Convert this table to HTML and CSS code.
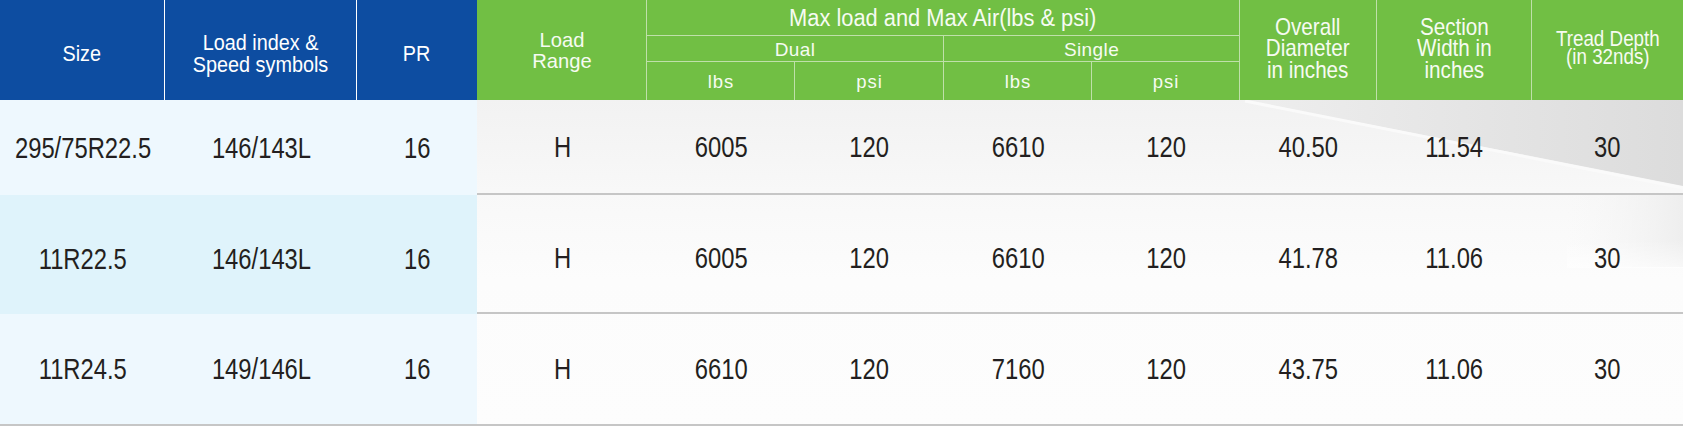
FILE: index.html
```html
<!DOCTYPE html>
<html lang="en">
<head>
<meta charset="utf-8">
<title>Tire specifications</title>
<link rel="stylesheet" href="styles.css">
</head>
<body>
<table class="spec">
  <colgroup>
    <col class="c-size"><col class="c-load"><col class="c-pr"><col class="c-range">
    <col class="c-lbs1"><col class="c-psi1"><col class="c-lbs2"><col class="c-psi2">
    <col class="c-od"><col class="c-sw"><col class="c-td">
  </colgroup>
  <thead>
    <tr class="hr-a">
      <th class="hb line" rowspan="3"><span class="sx">Size</span></th>
      <th class="hb line" rowspan="3"><span class="sx">Load index &amp;<br>Speed symbols</span></th>
      <th class="hb" rowspan="3"><span class="sx">PR</span></th>
      <th class="hg line range" rowspan="3"><span class="sx">Load<br>Range</span></th>
      <th class="hg line under group" colspan="4"><span class="sx">Max load and Max Air(lbs &amp; psi)</span></th>
      <th class="hg line cond" rowspan="3"><span class="sx">Overall<br>Diameter<br>in inches</span></th>
      <th class="hg line cond" rowspan="3"><span class="sx">Section<br>Width in<br>inches</span></th>
      <th class="hg cond tread" rowspan="3"><span class="sx">Tread Depth<br>(in 32nds)</span></th>
    </tr>
    <tr class="hr-b">
      <th class="hg line under sub" colspan="2">Dual</th>
      <th class="hg line under sub" colspan="2">Single</th>
    </tr>
    <tr class="hr-c">
      <th class="hg line unit">lbs</th>
      <th class="hg line unit">psi</th>
      <th class="hg line unit">lbs</th>
      <th class="hg line unit">psi</th>
    </tr>
  </thead>
  <tbody>
    <tr class="r1">
      <td class="lb"><span class="sx">295/75R22.5</span></td><td class="lb"><span class="sx">146/143L</span></td><td class="lb"><span class="sx">16</span></td>
      <td><span class="sx">H</span></td><td><span class="sx">6005</span></td><td><span class="sx">120</span></td><td><span class="sx">6610</span></td><td><span class="sx">120</span></td><td><span class="sx">40.50</span></td><td><span class="sx">11.54</span></td><td><span class="sx">30</span></td>
    </tr>
    <tr class="r2">
      <td class="lb"><span class="sx">11R22.5</span></td><td class="lb"><span class="sx">146/143L</span></td><td class="lb"><span class="sx">16</span></td>
      <td><span class="sx">H</span></td><td><span class="sx">6005</span></td><td><span class="sx">120</span></td><td><span class="sx">6610</span></td><td><span class="sx">120</span></td><td><span class="sx">41.78</span></td><td><span class="sx">11.06</span></td><td><span class="sx">30</span></td>
    </tr>
    <tr class="r3">
      <td class="lb"><span class="sx">11R24.5</span></td><td class="lb"><span class="sx">149/146L</span></td><td class="lb"><span class="sx">16</span></td>
      <td><span class="sx">H</span></td><td><span class="sx">6610</span></td><td><span class="sx">120</span></td><td><span class="sx">7160</span></td><td><span class="sx">120</span></td><td><span class="sx">43.75</span></td><td><span class="sx">11.06</span></td><td><span class="sx">30</span></td>
    </tr>
  </tbody>
</table>
</body>
</html>
```

FILE: styles.css
```css
html, body {
  margin: 0;
  padding: 0;
  background: #ffffff;
}

.spec {
  width: 1683px;
  table-layout: fixed;
  border-collapse: separate;
  border-spacing: 0;
  font-family: "Liberation Sans", Arial, sans-serif;
  background-color: #fbfbfb;
  background-image: url("data:image/svg+xml;utf8,%3Csvg xmlns='http://www.w3.org/2000/svg' width='1206' height='326'%3E%3Cdefs%3E%3ClinearGradient id='b' x1='0' y1='0' x2='0' y2='1'%3E%3Cstop offset='0' stop-color='%23f2f2f2'/%3E%3Cstop offset='0.28' stop-color='%23f8f8f8'/%3E%3Cstop offset='0.55' stop-color='%23fcfcfc'/%3E%3Cstop offset='1' stop-color='%23fdfdfd'/%3E%3C/linearGradient%3E%3ClinearGradient id='g' x1='0' y1='0' x2='1' y2='0'%3E%3Cstop offset='0' stop-color='%23eeeeee'/%3E%3Cstop offset='1' stop-color='%23dcdcdc'/%3E%3C/linearGradient%3E%3ClinearGradient id='e' x1='0' y1='0' x2='1' y2='0'%3E%3Cstop offset='0' stop-color='%23f6f6f6' stop-opacity='0'/%3E%3Cstop offset='1' stop-color='%23eeeeee'/%3E%3C/linearGradient%3E%3ClinearGradient id='v' x1='0' y1='0' x2='0' y2='1'%3E%3Cstop offset='0' stop-color='white' stop-opacity='0'/%3E%3Cstop offset='1' stop-color='white'/%3E%3C/linearGradient%3E%3C/defs%3E%3Crect width='1206' height='326' fill='url(%23b)'/%3E%3Crect x='1090' y='95' width='116' height='72' fill='url(%23e)'/%3E%3Crect x='1090' y='140' width='116' height='28' fill='url(%23v)' opacity='0.6'/%3E%3Cpolygon points='768,0 1206,0 1206,86' fill='url(%23g)'/%3E%3Cline x1='768' y1='1' x2='1206' y2='88' stroke='%23fafafa' stroke-width='3'/%3E%3C/svg%3E");
  background-repeat: no-repeat;
  background-position: 477px 100px;
  background-size: 1206px 326px;
}

.c-size { width: 165px; }
.c-load { width: 192px; }
.c-pr { width: 120px; }
.c-range { width: 170px; }
.c-lbs1 { width: 148px; }
.c-psi1 { width: 149px; }
.c-lbs2 { width: 148px; }
.c-psi2 { width: 148px; }
.c-od { width: 137px; }
.c-sw { width: 155px; }
.c-td { width: 151px; }

/* condensed text: Arial metrics squeezed to DIN-like widths */
.sx {
  display: inline-block;
  transform-origin: 50% 50%;
  white-space: nowrap;
}

/* header */
th {
  padding: 0;
  font-weight: normal;
  color: #ffffff;
  text-align: center;
  vertical-align: middle;
  box-sizing: border-box;
}

.hr-a { height: 36px; }
.hr-b { height: 26px; }
.hr-c { height: 38px; }

.hb {
  background: #0d4da1;
  font-size: 22.4px;
  line-height: 22px;
  padding-top: 8px;
}
.hb .sx { transform: scaleX(0.885); }
.hb.line { border-right: 1px solid #ffffff; }

.hg {
  background: #71bf44;
  color: #f6fbf2;
}
.hg.line { border-right: 1px solid #bfe0aa; }
.hg.under { border-bottom: 1px solid #bfe0aa; }

.range {
  font-size: 21px;
  line-height: 21.5px;
}
.range .sx { transform: scaleX(0.96); }

.group {
  font-size: 23px;
  line-height: 24px;
  padding-top: 1px;
}
.group .sx { transform: scaleX(0.95); }

.sub {
  font-size: 19px;
  letter-spacing: 0.4px;
  line-height: 20px;
  padding-top: 2px;
}

.unit {
  font-size: 18.5px;
  letter-spacing: 1px;
  line-height: 20px;
  padding-left: 1px;
  padding-top: 2px;
}

.cond {
  font-size: 24px;
  line-height: 21.3px;
  padding-bottom: 4px;
}
.cond .sx { transform: scaleX(0.86); }

.cond.tread {
  font-size: 22.4px;
  line-height: 18.5px;
}
.cond.tread .sx { transform: scaleX(0.84); }

/* body */
td {
  padding: 0;
  text-align: center;
  vertical-align: middle;
  font-size: 29px;
  line-height: 30px;
  color: #231f20;
  border-bottom: 2px solid #c6c6c6;
  box-sizing: border-box;
}
td .sx { transform: scaleX(0.82); }

td.lb {
  background: #eef8fe;
  border-bottom: none;
}

.r1 { height: 95px; }
.r2 { height: 119px; }
.r3 { height: 112px; }

.r2 td { padding-top: 8px; }
.r2 td.lb { background: #dff3fb; }
.r3 td.lb { border-bottom: 2px solid #c6c6c6; }
```
